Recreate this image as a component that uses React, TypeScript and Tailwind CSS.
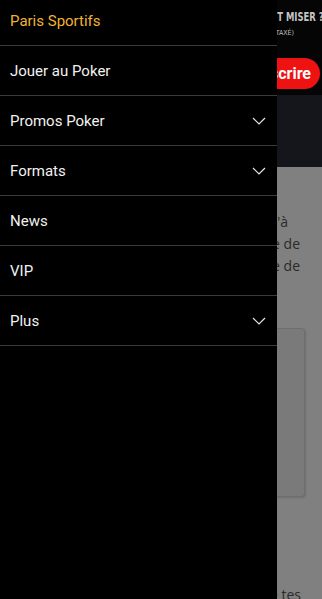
import { ChevronDown } from 'lucide-react';

const items = [
  { label: 'Jouer au Poker', sub: false },
  { label: 'Promos Poker', sub: true },
  { label: 'Formats', sub: true },
  { label: 'News', sub: false },
  { label: 'VIP', sub: false },
  { label: 'Plus', sub: true },
];

const Chevron = () => (
  <svg width="14" height="8" viewBox="0 0 14 8" fill="none" className="mr-[11px] mb-[1px]">
    <path d="M1 1l6 6 6-6" stroke="#e8e8e8" strokeWidth="1.2" />
  </svg>
);

const PageBehind = () => {
  return (
    <div className="flex flex-col w-full h-full">
      <div className="bg-[#050505] h-[95px] flex flex-col items-end">
        <div className="w-full overflow-hidden flex justify-end mt-[10px]">
          <p
            className="whitespace-nowrap text-[#c4c4c4] text-[12px] font-bold leading-[15px] mr-[-2px] origin-right scale-x-[0.78]"
            style={{ fontFamily: '"DejaVu Sans Condensed", "Liberation Sans Narrow", sans-serif' }}
          >
            POURQUOI NE PAS TOUT MISER ?
          </p>
        </div>
        <div className="w-full overflow-hidden flex justify-end mt-[3px]">
          <p
            className="whitespace-nowrap text-[#bdbdbd] text-[7px] mr-[28px] leading-[10px]"
            style={{ fontFamily: '"DejaVu Sans Condensed", sans-serif' }}
          >
            (BONUS NON TAXÉ)
          </p>
        </div>
        <div className="mt-[20px] mr-[2px] h-[31px] bg-[#ef1212] rounded-full flex items-center pl-5 pr-[9px]">
          <span className="text-white text-[16px] font-bold" style={{ fontFamily: 'Roboto, sans-serif' }}>
            S'inscrire
          </span>
        </div>
      </div>
      <div className="bg-[#15161b] h-[72px]" />
      <div className="bg-[#808080] flex-1 flex flex-col items-end pr-[22px] pt-[44px]">
        <div
          className="text-[#2a2a2a] text-[14px] leading-[22px] text-right w-[200px]"
          style={{ fontFamily: '"Open Sans", sans-serif' }}
        >
          <p className="mr-[12px]">Lorem de bienvenue jusqu'à</p>
          <p>le meilleur site de</p>
          <p>poker en ligne de</p>
        </div>
        <div className="mt-[51px] mr-[-5px] w-[200px] h-[169px] rounded-[4px] border border-[#6e6e6e] bg-[#7a7a7a] shadow-[1px_1px_2px_rgba(0,0,0,0.15)]" />
        <div className="flex-1" />
        <p
          className="text-[#2a2a2a] text-[14px] leading-[16px] mb-[-4px] mr-[-1px]"
          style={{ fontFamily: '"Open Sans", sans-serif' }}
        >
          Rejoins-nous et teste tes
        </p>
      </div>
    </div>
  );
};

const App = () => {
  return (
    <div className="relative w-[322px] h-[599px] overflow-hidden bg-[#808080]">
      <PageBehind />
      <nav
        className="absolute left-0 top-0 w-[277px] h-full bg-black"
        style={{ fontFamily: 'Roboto, "Noto Sans", sans-serif' }}
      >
        <div className="h-[46px] border-b border-[#3b3b3b] flex items-center pl-[10px] pb-[2px]">
          <span className="text-[#f0b434] text-[15px]">Paris Sportifs</span>
        </div>
        {items.map((it) => (
          <div
            key={it.label}
            className="h-[50px] border-b border-[#3b3b3b] flex items-center justify-between pl-[10px] pt-[2px]"
          >
            <span className="text-[#f2f2f2] text-[15px]">{it.label}</span>
            {it.sub && <Chevron />}
          </div>
        ))}
      </nav>
    </div>
  );
};

export default App;
